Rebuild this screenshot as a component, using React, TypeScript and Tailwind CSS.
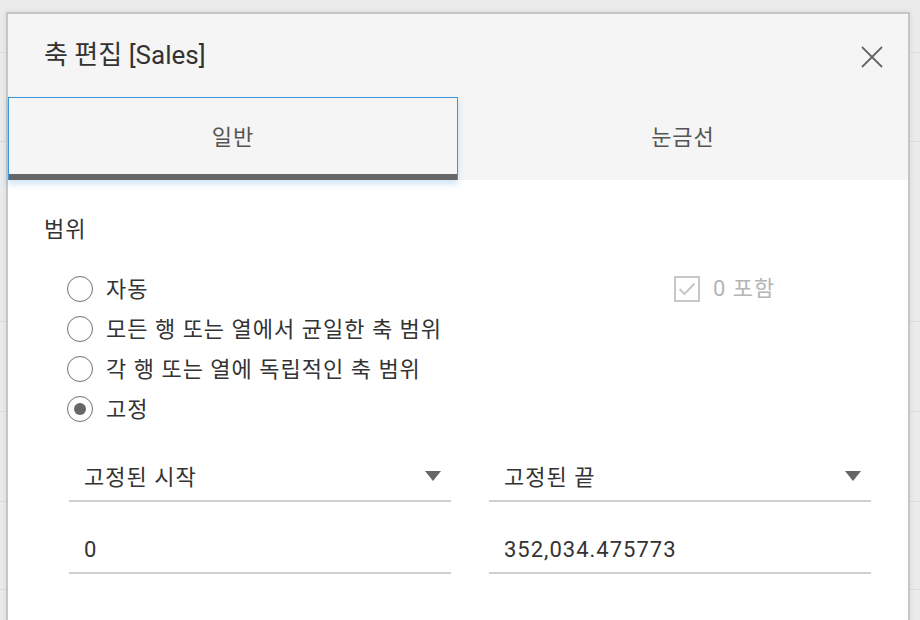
import React from 'react'

const font = { fontFamily: '"Roboto", "Noto Sans CJK KR", sans-serif' }

function Radio({ label, checked }: { label: string; checked?: boolean }) {
  return (
    <div className="flex items-center h-[40px]">
      <span className="w-[26px] h-[26px] rounded-full border-[1.5px] border-[#707070] bg-white flex items-center justify-center">
        {checked && <span className="w-[12px] h-[12px] rounded-full bg-[#666]" />}
      </span>
      <span className="ml-[13px] text-[22px] tracking-[1px] text-[#333]">{label}</span>
    </div>
  )
}

function Select({ label }: { label: string }) {
  return (
    <div className="flex items-center justify-between h-[52px] pt-[4px] pl-[15px] pr-[10px] border-b-2 border-[#cfcfcf]">
      <span className="text-[22px] tracking-[1px] text-[#333]">{label}</span>
      <svg width="16" height="10" viewBox="0 0 16 10" className="-mt-[2px]">
        <path d="M0 0 H16 L8 10 Z" fill="#666" />
      </svg>
    </div>
  )
}

function Field({ value }: { value: string }) {
  return (
    <div className="flex items-center h-[72px] pl-[15px] pt-[24px] border-b-2 border-[#cfcfcf]">
      <span className="text-[22px] tracking-[1px] text-[#333]">{value}</span>
    </div>
  )
}

export default function App() {
  return (
    <div className="relative w-[920px] h-[620px] overflow-hidden bg-[#ebebeb]" style={font}>
      {/* page behind the dialog */}
      <div className="flex flex-col">
        <div className="h-[53px] border-b border-[#dcdcdc]" />
        <div className="h-[89px] border-b border-[#dcdcdc]" />
        <div className="h-[180px] border-b border-[#dcdcdc]" />
        <div className="h-[90px] border-b border-[#dcdcdc]" />
        <div className="h-[90px] border-b border-[#dcdcdc]" />
        <div className="h-[88px] border-b border-[#dcdcdc]" />
      </div>

      <div className="absolute left-[6px] top-[12px] w-[904px] h-[640px] bg-white border-2 border-[#c6c6c6] shadow-[0_0_6px_rgba(0,0,0,0.08)]">
        <div className="bg-[#f5f5f5]">
          <div className="flex items-center justify-between h-[83px] pl-[36px] pr-[24px]">
            <span className="text-[26px] text-[#333]">축 편집 [Sales]</span>
            <svg width="24" height="24" viewBox="0 0 24 24" className="mt-[2px]">
              <path d="M2 2 L22 22 M22 2 L2 22" stroke="#666" strokeWidth="1.8" />
            </svg>
          </div>
          <div className="flex h-[83px]">
            <div className="relative w-[450px] flex items-center justify-center border border-[#3b97dc] border-b-0 shadow-[0_4px_6px_rgba(59,151,220,0.25)]">
              <span className="text-[22px] tracking-[1px] text-[#555] -mt-[3px]">일반</span>
              <div className="absolute left-0 right-0 bottom-0 h-[6px] bg-[#666]" />
            </div>
            <div className="flex-1 flex items-center justify-center">
              <span className="text-[22px] tracking-[1px] text-[#555] -mt-[3px]">눈금선</span>
            </div>
          </div>
        </div>

        <div className="pl-[36px] pr-[37px] pt-[36px]">
          <div className="text-[22px] tracking-[1px] text-[#333] leading-[28px]">범위</div>
          <div className="flex mt-[25px]">
            <div className="flex-1 pl-[23px]">
              <Radio label="자동" />
              <Radio label="모든 행 또는 열에서 균일한 축 범위" />
              <Radio label="각 행 또는 열에 독립적인 축 범위" />
              <Radio label="고정" checked />
            </div>
            <div className="w-[197px] flex items-start pt-[7px]">
              <span className="w-[26px] h-[26px] border-2 border-[#c8c8c8] flex items-center justify-center">
                <svg width="18" height="14" viewBox="0 0 18 14">
                  <path d="M1.5 7 L6.5 12 L16.5 1.5" stroke="#c8c8c8" strokeWidth="2" fill="none" />
                </svg>
              </span>
              <span className="ml-[13px] text-[22px] tracking-[1px] text-[#b5b5b5] leading-[26px]">0 포함</span>
            </div>
          </div>

          <div className="grid grid-cols-2 gap-x-[38px] pl-[25px] mt-[21px]">
            <Select label="고정된 시작" />
            <Select label="고정된 끝" />
            <Field value="0" />
            <Field value="352,034.475773" />
          </div>
        </div>
      </div>
    </div>
  )
}
